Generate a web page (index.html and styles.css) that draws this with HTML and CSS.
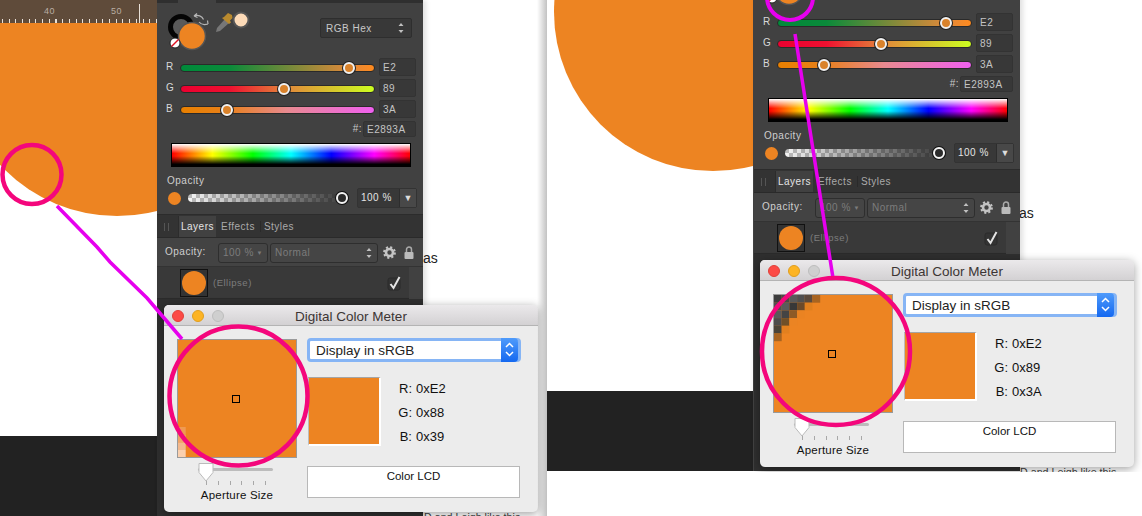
FILE: index.html
```html
<!DOCTYPE html>
<html lang="en">
<head>
<meta charset="utf-8">
<title>Digital Color Meter comparison</title>
<link rel="stylesheet" href="styles.css">
</head>
<body>
<svg width="0" height="0" class="defs">
  <defs>
    <g id="head-art">
      <circle cx="24" cy="24" r="10.5" fill="#5a5a5a" stroke="#050505" stroke-width="5"/>
      <circle cx="35" cy="33" r="13.5" fill="#ed8422" stroke="#555" stroke-width="1.5"/>
      <circle cx="18" cy="40" r="5" fill="#fff" stroke="#222"/>
      <path d="M14.5 43.5 21.5 36.5" stroke="#e01020" stroke-width="1.4"/>
      <path d="M37 13c4-1.500 8 0 9.500 3.500M37 13l3-2.500M37 13l3.500 1.500M51 21c-4 1.500-7 .5-9-2M51 21l-3.500.5M51 21l-.5-3.500" fill="none" stroke="#b5b5b5" stroke-width="1.200"/>
      <path d="M60 25l8-9 4 4-9 8-4 1z" fill="#777"/>
      <path d="M67 14l4-4 4 2 .5 3-2.500 2.500 1 2-2 1.500-7-6z" fill="#b98a2e"/>
      <circle cx="84" cy="17" r="7.500" fill="#fddbb8" stroke="#555" stroke-width="2"/>
    </g>
    <g id="updown">
      <path d="M1.500 4 4 1l2.500 3zM1.500 8 4 11l2.500-3z" fill="currentColor"/>
    </g>
    <g id="gear">
      <circle cx="6.500" cy="6.500" r="3.500" fill="none" stroke="#c4c4c4" stroke-width="2.600"/>
      <circle cx="6.500" cy="6.500" r="5.400" fill="none" stroke="#c4c4c4" stroke-width="2" stroke-dasharray="2.120 2.120"/>
    </g>
    <g id="lock">
      <path d="M2.500 6V3.500a2.500 2.500 0 0 1 5 0V6" fill="none" stroke="#aaa" stroke-width="1.500"/>
      <rect x="0.500" y="6" width="9" height="7" rx="1" fill="#bbb"/>
    </g>
    <g id="check">
      <rect x="1" y="3" width="12" height="12" rx="2" fill="#333" stroke="#2b2b2b"/>
      <path d="M3.500 9 6.500 13 12.500 2" fill="none" stroke="#e4e4e4" stroke-width="2"/>
    </g>
    <g id="stepper">
      <path d="M2 6 5.500 2.500 9 6M2 11 5.500 14.500 9 11" fill="none" stroke="#fff" stroke-width="1.500"/>
    </g>
    <g id="knob">
      <path d="M1 1.500h14v9L8 19 1 10.500z" fill="#fff" stroke="#bbb"/>
    </g>
  </defs>
</svg>

<section class="shot shot-left">
  <div class="scene">
    <div class="canvas">
      <div class="ruler">
        <span class="ruler-num num-40">40</span>
        <span class="ruler-num num-50">50</span>
        <span class="ruler-cursor"></span>
      </div>
      <div class="ellipse"></div>
      <div class="canvas-floor"></div>
    </div>
    <p class="page-word">as</p>
    <p class="page-line">D and Leigh like this</p>

    <aside class="panel">
      <div class="top-strip"><span class="top-tab"></span></div>
      <div class="color-head">
        <svg class="head-art" viewBox="0 0 100 55" width="100" height="55"><use href="#head-art"/></svg>
        <div class="mode-select"><span>RGB Hex</span><svg class="updown" width="8" height="12"><use href="#updown"/></svg></div>
      </div>
      <div class="channel"><span class="ch-label">R</span><div class="track track-r"><i class="thumb" style="left:87%"></i></div><span class="field ch-value">E2</span></div>
      <div class="channel"><span class="ch-label">G</span><div class="track track-g"><i class="thumb" style="left:53.500%"></i></div><span class="field ch-value">89</span></div>
      <div class="channel"><span class="ch-label">B</span><div class="track track-b"><i class="thumb" style="left:24%"></i></div><span class="field ch-value">3A</span></div>
      <div class="hex-row"><span class="hex-label">#:</span><span class="field hex-value">E2893A</span></div>
      <div class="spectrum"></div>
      <div class="opacity-label">Opacity</div>
      <div class="opacity-row">
        <span class="dot"></span>
        <div class="alpha-track"><i class="alpha-thumb"></i></div>
        <div class="combo"><span class="combo-value">100 %</span><span class="combo-arrow">▼</span></div>
      </div>
      <div class="tabbar"><span class="grip"></span><span class="tab tab-active">Layers</span><span class="tab">Effects</span><span class="tab tab-last">Styles</span></div>
      <div class="layer-controls">
        <span class="lc-label">Opacity:</span>
        <span class="mini-select mini-pct"><span>100 %</span><b>▼</b></span>
        <span class="mini-select mini-mode"><span>Normal</span><svg class="updown" width="8" height="12"><use href="#updown"/></svg></span>
        <svg class="lc-icon" width="13" height="13"><use href="#gear"/></svg>
        <svg class="lc-icon" width="10" height="14"><use href="#lock"/></svg>
      </div>
      <div class="layer-row">
        <span class="layer-thumb"><i></i></span>
        <span class="layer-name">(Ellipse)</span>
        <svg class="layer-check" width="14" height="16"><use href="#check"/></svg>
      </div>
      <div class="panel-rest"></div>
    </aside>

    <div class="meter">
      <header class="meter-title">
        <span class="light light-red"></span><span class="light light-yellow"></span><span class="light light-off"></span>
        <span class="meter-name">Digital Color Meter</span>
      </header>
      <div class="meter-body">
        <div class="meter-left">
          <div class="aperture">
            <svg class="cross-svg" width="118" height="117" viewBox="0 0 118 117">
              <rect x="0" y="87" width="7.700" height="7.700" fill="#ef9a52"/>
              <rect x="0" y="94.700" width="7.700" height="7.700" fill="#f0a468"/>
              <rect x="0" y="102.400" width="7.700" height="7.700" fill="#f3b88c"/>
              <rect x="0" y="110" width="7.700" height="7" fill="#fbd0ae"/>
            </svg>
            <span class="crosshair"></span>
          </div>
          <div class="ap-slider">
            <svg class="ap-knob" width="16" height="20"><use href="#knob"/></svg>
            <div class="ap-ticks"><i></i><i></i><i></i><i></i><i></i><i></i></div>
          </div>
          <div class="ap-label">Aperture Size</div>
        </div>
        <div class="meter-right">
          <div class="display-select"><span>Display in sRGB</span><svg class="stepper" width="11" height="17"><use href="#stepper"/></svg></div>
          <div class="readout-row">
            <div class="swatch"></div>
            <dl class="readout">
              <div><dt>R:</dt><dd>0xE2</dd></div>
              <div><dt>G:</dt><dd>0x88</dd></div>
              <div><dt>B:</dt><dd>0x39</dd></div>
            </dl>
          </div>
          <div class="lcd">Color LCD</div>
        </div>
      </div>
    </div>
  </div>
  <svg class="marks" width="547" height="516" viewBox="0 0 547 516">
    <circle class="mark-pink" cx="32" cy="174.500" r="29.500"/>
    <path class="mark-line" d="M57 206 97 247 110 262 147 298 182 339"/>
    <ellipse class="mark-pink" cx="238.500" cy="396" rx="69" ry="69.500"/>
  </svg>
  <div class="edge-shade"></div>
</section>

<section class="shot shot-right">
  <div class="scene scene-shifted">
    <div class="canvas">
      <div class="ruler">
        <span class="ruler-num num-40">40</span>
        <span class="ruler-num num-50">50</span>
      </div>
      <div class="ellipse"></div>
      <div class="canvas-floor"></div>
    </div>
    <p class="page-word">as</p>
    <p class="page-line">D and Leigh like this</p>

    <aside class="panel">
      <div class="top-strip"><span class="top-tab"></span></div>
      <div class="color-head">
        <svg class="head-art" viewBox="0 0 100 55" width="100" height="55"><use href="#head-art"/></svg>
        <div class="mode-select"><span>RGB Hex</span><svg class="updown" width="8" height="12"><use href="#updown"/></svg></div>
      </div>
      <div class="channel"><span class="ch-label">R</span><div class="track track-r"><i class="thumb" style="left:87%"></i></div><span class="field ch-value">E2</span></div>
      <div class="channel"><span class="ch-label">G</span><div class="track track-g"><i class="thumb" style="left:53.500%"></i></div><span class="field ch-value">89</span></div>
      <div class="channel"><span class="ch-label">B</span><div class="track track-b"><i class="thumb" style="left:24%"></i></div><span class="field ch-value">3A</span></div>
      <div class="hex-row"><span class="hex-label">#:</span><span class="field hex-value">E2893A</span></div>
      <div class="spectrum"></div>
      <div class="opacity-label">Opacity</div>
      <div class="opacity-row">
        <span class="dot"></span>
        <div class="alpha-track"><i class="alpha-thumb"></i></div>
        <div class="combo"><span class="combo-value">100 %</span><span class="combo-arrow">▼</span></div>
      </div>
      <div class="tabbar"><span class="grip"></span><span class="tab tab-active">Layers</span><span class="tab">Effects</span><span class="tab tab-last">Styles</span></div>
      <div class="layer-controls">
        <span class="lc-label">Opacity:</span>
        <span class="mini-select mini-pct"><span>100 %</span><b>▼</b></span>
        <span class="mini-select mini-mode"><span>Normal</span><svg class="updown" width="8" height="12"><use href="#updown"/></svg></span>
        <svg class="lc-icon" width="13" height="13"><use href="#gear"/></svg>
        <svg class="lc-icon" width="10" height="14"><use href="#lock"/></svg>
      </div>
      <div class="layer-row">
        <span class="layer-thumb"><i></i></span>
        <span class="layer-name">(Ellipse)</span>
        <svg class="layer-check" width="14" height="16"><use href="#check"/></svg>
      </div>
      <div class="panel-rest"></div>
    </aside>

    <div class="meter">
      <header class="meter-title">
        <span class="light light-red"></span><span class="light light-yellow"></span><span class="light light-off"></span>
        <span class="meter-name">Digital Color Meter</span>
      </header>
      <div class="meter-body">
        <div class="meter-left">
          <div class="aperture">
            <svg class="cross-svg" width="118" height="117" viewBox="0 0 118 117">
              <g class="px-row">
                <rect x="0" y="0" width="7.700" height="7.700" fill="#3d3d3d"/><rect x="7.700" y="0" width="7.700" height="7.700" fill="#4a4a4a"/><rect x="15.400" y="0" width="7.700" height="7.700" fill="#5a5a5a"/><rect x="23.100" y="0" width="7.700" height="7.700" fill="#505050"/><rect x="30.800" y="0" width="7.700" height="7.700" fill="#5a4a3c"/><rect x="38.500" y="0" width="7.700" height="7.700" fill="#a86420"/>
                <rect x="0" y="7.700" width="7.700" height="7.700" fill="#505050"/><rect x="7.700" y="7.700" width="7.700" height="7.700" fill="#5b5b5b"/><rect x="15.400" y="7.700" width="7.700" height="7.700" fill="#383838"/><rect x="23.100" y="7.700" width="7.700" height="7.700" fill="#6b4a2a"/><rect x="30.800" y="7.700" width="7.700" height="7.700" fill="#e0801f"/>
                <rect x="0" y="15.400" width="7.700" height="7.700" fill="#5a5a5a"/><rect x="7.700" y="15.400" width="7.700" height="7.700" fill="#444"/><rect x="15.400" y="15.400" width="7.700" height="7.700" fill="#8d5a26"/><rect x="23.100" y="15.400" width="7.700" height="7.700" fill="#ea8322"/>
                <rect x="0" y="23.100" width="7.700" height="7.700" fill="#4c4c4c"/><rect x="7.700" y="23.100" width="7.700" height="7.700" fill="#705028"/><rect x="15.400" y="23.100" width="7.700" height="7.700" fill="#eb8423"/>
                <rect x="0" y="30.800" width="7.700" height="7.700" fill="#4a4438"/><rect x="7.700" y="30.800" width="7.700" height="7.700" fill="#e2801f"/>
                <rect x="0" y="38.500" width="7.700" height="7.700" fill="#a86420"/>
              </g>
            </svg>
            <span class="crosshair"></span>
          </div>
          <div class="ap-slider">
            <svg class="ap-knob" width="16" height="20"><use href="#knob"/></svg>
            <div class="ap-ticks"><i></i><i></i><i></i><i></i><i></i><i></i></div>
          </div>
          <div class="ap-label">Aperture Size</div>
        </div>
        <div class="meter-right">
          <div class="display-select"><span>Display in sRGB</span><svg class="stepper" width="11" height="17"><use href="#stepper"/></svg></div>
          <div class="readout-row">
            <div class="swatch"></div>
            <dl class="readout">
              <div><dt>R:</dt><dd>0xE2</dd></div>
              <div><dt>G:</dt><dd>0x89</dd></div>
              <div><dt>B:</dt><dd>0x3A</dd></div>
            </dl>
          </div>
          <div class="lcd">Color LCD</div>
        </div>
      </div>
    </div>
  </div>
  <svg class="marks" width="595" height="472" viewBox="0 0 595 472">
    <circle class="mark-magenta" cx="243" cy="-3" r="23"/>
    <path class="mark-line" d="M248 34 286 278"/>
    <ellipse class="mark-pink" cx="289" cy="351.500" rx="74" ry="73.500"/>
  </svg>
</section>
</body>
</html>
```

FILE: styles.css
```css
* { box-sizing: border-box; }
html, body { margin: 0; padding: 0; }
body {
  position: relative;
  width: 1142px;
  height: 516px;
  overflow: hidden;
  background: #fff;
  font-family: "Liberation Sans", Arial, sans-serif;
}
.defs { position: absolute; }

/* the two photographed windows on the free canvas */
.shot { position: absolute; top: 0; overflow: hidden; background: #fff; }
.shot-left { left: 0; width: 547px; height: 516px; }
.shot-right { left: 547px; width: 595px; height: 472px; }
.scene { position: absolute; left: 0; top: 0; width: 595px; height: 516px; }
.scene-shifted { left: 49px; top: -45px; }
.scene-shifted .panel { width: 267px; padding-left: 1px; }
.marks { position: absolute; left: 0; top: 0; overflow: hidden; }
.mark-pink { fill: none; stroke: #f4067c; stroke-width: 4.5; }
.mark-magenta { fill: none; stroke: #e600ee; stroke-width: 4; }
.mark-line { fill: none; stroke: #e600ee; stroke-width: 3.500; }
.edge-shade {
  position: absolute; right: 0; top: 0; width: 10px; height: 100%;
  background: linear-gradient(90deg, rgba(0,0,0,0), rgba(0,0,0,.24));
}

/* document canvas */
.canvas { position: absolute; left: -49px; top: 0; width: 206px; height: 516px; overflow: hidden; background: #fff; }
.ruler {
  position: relative; z-index: 1; height: 23px;
  background:
    repeating-linear-gradient(90deg, #e8e0d8 0 1px, transparent 1px 6.700px) 4px 19px / 100% 4px no-repeat,
    #5f4b3a;
}
.ruler-num { position: absolute; top: 6px; font-size: 9px; letter-spacing: .5px; color: #b9aea3; }
.num-40 { left: 93px; }
.num-50 { left: 160px; }
.ruler-cursor { position: absolute; left: 188px; top: 4px; width: 1px; height: 19px; background: #e8e0d8; }
.ellipse { position: absolute; left: 7px; top: -102px; width: 318px; height: 318px; border-radius: 50%; background: #ed8422; }
.canvas-floor { position: absolute; left: 0; right: 0; top: 436px; bottom: 0; background: #222; }

.page-word { position: absolute; left: 423px; top: 250px; margin: 0; font-size: 14px; color: #222; }
.page-line { position: absolute; left: 424px; top: 511px; margin: 0; font-size: 10.700px; color: #444; white-space: nowrap; }

/* Affinity panel */
.panel {
  position: absolute; left: 157px; top: 0; width: 266px; height: 516px;
  display: flex; flex-direction: column;
  background: #414141; color: #cfcfcf; font-size: 10px; letter-spacing: .5px;
  box-shadow: 3px 0 5px rgba(0,0,0,.12);
}
.top-strip { height: 3px; background: #2f2f2f; padding-left: 21px; flex: none; }
.top-tab { display: block; width: 38px; height: 3px; background: #414141; }
.color-head { height: 55px; flex: none; display: flex; padding: 0 11px 0 0; align-items: flex-start; justify-content: space-between; }
.head-art { display: block; }
.mode-select {
  margin-top: 15px; width: 92px; height: 20px; padding: 0 6px 0 5px;
  display: flex; align-items: center; justify-content: space-between;
  background: #383838; border: 1px solid #2e2e2e; border-radius: 2px; color: #c8c8c8;
}
.updown { color: #c0c0c0; flex: none; }
.channel { height: 21px; flex: none; display: flex; align-items: center; padding: 0 7px 3px 9px; }
.ch-label { width: 14px; font-size: 10px; margin-top: -1px; color: #d8d8d8; }
.track { position: relative; top: 1px; width: 195px; height: 8px; border-radius: 4px; border: 1px solid #2a2a2a; }
.track-r { background: linear-gradient(90deg, #008a3a, #0a8a3a 25%, #e2893a 88%, #ff8a1e); }
.track-g { background: linear-gradient(90deg, #ec0030, #ee1030 25%, #e2893a 55%, #ccff20); }
.track-b { background: linear-gradient(90deg, #e88000, #e8801a 24%, #e88a90 55%, #f060f0); }
.thumb {
  position: absolute; top: -3px; width: 12px; height: 12px; margin-left: -6px; border-radius: 50%;
  background: #d9822b; border: 2px solid #f0f0f0; box-shadow: 0 0 0 1px #222;
}
.field {
  display: flex; align-items: center; padding-left: 3px; height: 18px;
  background: #383838; border: 1px solid #333; border-radius: 2px; color: #c4c4c4; font-size: 10px;
}
.ch-value { width: 37px; margin-left: 4px; }
.hex-row { height: 16px; flex: none; display: flex; justify-content: flex-end; align-items: center; padding-right: 7px; gap: 1px; }
.hex-label { margin-top: -2px; color: #c8c8c8; }
.hex-value { width: 53px; height: 16px; }
.spectrum {
  flex: none; width: 240px; height: 24px; margin: 6px 0 0 14px; border: 1px solid #000;
  background:
    linear-gradient(#fff 0, rgba(255,255,255,0) 42%, rgba(0,0,0,0) 55%, #000 92%),
    linear-gradient(90deg, #f00 0, #ff0 17%, #0f0 34%, #0ff 50%, #00f 67%, #f0f 85%, #f00 100%);
}
.opacity-label { height: 21px; flex: none; margin-left: 10px; padding-top: 8px; font-size: 10px; color: #cfcfcf; }
.opacity-row { height: 20px; flex: none; display: flex; align-items: center; padding-left: 11px; }
.dot { width: 13px; height: 13px; border-radius: 50%; background: #ed8422; flex: none; }
.alpha-track {
  position: relative; width: 158px; height: 8px; margin-left: 7px; border-radius: 4px;
  background:
    linear-gradient(90deg, rgba(255,255,255,.55), rgba(50,50,50,.92) 97%),
    repeating-conic-gradient(#e8e8e8 0 25%, #6a6a6a 0 50%) 0 0 / 8px 8px;
}
.alpha-thumb {
  position: absolute; right: -2px; top: -2px; width: 12px; height: 12px; border-radius: 50%;
  background: #2b2b2b; border: 2px solid #f4f4f4; box-shadow: 0 0 0 1px #111;
}
.combo {
  width: 60px; height: 20px; margin-left: 11px; display: flex; border: 1px solid #333; border-radius: 2px;
  background: #383838; color: #e4e4e4; font-size: 10px;
}
.combo-value { flex: 1; padding: 3px 0 0 3px; }
.combo-arrow { width: 17px; border-left: 1px solid #2d2d2d; background: #484848; font-size: 9px; letter-spacing: 0; text-align: center; padding-top: 4px; color: #ddd; }
.tabbar {
  flex: none; height: 24px; margin-top: 6px; padding: 1px 0 0 7px; display: flex; align-items: center;
  background: #333; border-top: 1px solid #2c2c2c; border-bottom: 1px solid #2a2a2a; color: #aaa; font-size: 10px;
}
.grip { width: 5px; height: 8px; margin-right: 9px; border-left: 1px solid #555; border-right: 1px solid #555; }
.tab { padding: 0 5px 0 3px; line-height: 11px; border-right: 1px solid #2a2a2a; }
.tab-active { display: flex; align-items: center; align-self: stretch; width: 38px; padding: 0 0 0 2px; background: #414141; color: #e4e4e4; margin-right: 2px; border-right: 0; border-left: 1px solid #2c2c2c; }
.tab-last { border-right: 0; padding-left: 3px; }
.layer-controls {
  flex: none; height: 29px; display: flex; align-items: center; padding: 1px 0 0 8px;
  background: #434343; color: #cfcfcf; border-bottom: 1px solid #333;
}
.lc-label { width: 53px; margin-top: -2px; font-size: 10px; }
.mini-select {
  height: 20px; display: flex; align-items: center; justify-content: space-between;
  border: 1px solid #2e2e2e; border-radius: 3px; background: #454545; color: #7c7c7c; padding: 0 4px;
}
.mini-select b { font-size: 6px; font-weight: 400; }
.mini-pct { width: 50px; }
.mini-mode { width: 108px; margin-left: 2px; }
.lc-icon { margin-left: 5px; flex: none; }
.lc-icon + .lc-icon { margin-left: 8px; }
.layer-row {
  flex: none; height: 32px; display: flex; align-items: center; padding-left: 23px;
  width: 252px; background: #393939; border-bottom: 1px solid #2b2b2b; color: #7d7d7d; font-size: 9.500px;
}
.layer-thumb { width: 28px; height: 28px; padding: 1px; background: #333; border: 1px solid #111; flex: none; }
.layer-thumb i { display: block; width: 100%; height: 100%; border-radius: 50%; background: #ed8422; }
.layer-name { margin-left: 5px; flex: 1; }
.layer-check { margin-right: 8px; }
.panel-rest { flex: 1; background: #2f2f2f; }

/* Digital Color Meter */
.meter {
  position: absolute; left: 164px; top: 305px; width: 374px; height: 207px;
  display: flex; flex-direction: column;
  background: #ececec; border-radius: 5px; overflow: hidden; color: #111;
  box-shadow: 0 2px 10px rgba(0,0,0,.38);
}
.meter-title {
  position: relative; flex: none; height: 21px; padding: 5px 0 0 8px; display: flex; gap: 8px;
  background: linear-gradient(#ebe9eb, #d3d1d3); border-bottom: 1px solid #b4b4b4;
}
.light { width: 12px; height: 12px; border-radius: 50%; }
.light-red { background: #fc4a46; border: 1px solid #e0403a; }
.light-yellow { background: #fdb424; border: 1px solid #e09e1e; }
.light-off { background: #cfcfcf; border: 1px solid #bdbdbd; }
.meter-name { position: absolute; left: 0; right: 0; top: 4px; text-align: center; font-size: 13.500px; line-height: 15px; color: #3c3534; }
.meter-body { flex: 1; display: flex; padding: 13px 0 0 13px; gap: 10px; }
.meter-left { width: 120px; flex: none; }
.aperture { position: relative; width: 120px; height: 119px; background: #ed8422; border: 1px solid #9a9a9a; }
.cross-svg { display: block; }
.crosshair { position: absolute; left: 54px; top: 55px; width: 8px; height: 8px; border: 1px solid #000; }
.ap-slider { position: relative; width: 75px; height: 26px; margin-left: 21px; }
.ap-slider::before { content: ""; position: absolute; left: 0; right: 0; top: 10px; height: 3px; border-radius: 2px; background: #bcbcbc; }
.ap-knob { position: absolute; left: 0; top: 4px; }
.ap-ticks { position: absolute; left: 8px; right: 7px; top: 23px; display: flex; justify-content: space-between; }
.ap-ticks i { width: 1px; height: 4px; background: #a8a8a8; }
.ap-label { margin-top: 5px; text-align: center; font-size: 11.500px; line-height: 13px; color: #111; letter-spacing: .2px; }
.meter-right { width: 214px; flex: none; margin-top: -1px; }
.display-select {
  position: relative; height: 24px; display: flex; align-items: center; padding-left: 6px;
  background: #fff; border: 3px solid #86b5f5; border-radius: 4px; font-size: 13.500px; color: #222;
}
.stepper { position: absolute; right: 0; top: -3px; width: 17px; height: 24px; padding: 3px 3px; background: linear-gradient(#4f9bfb, #1468f0); border-radius: 0 4px 4px 0; }
.readout-row { display: flex; margin-top: 15px; }
.swatch { width: 73px; height: 69px; margin-left: 1px; background: #ed8422; border: 2px solid #fff; border-top: 1px solid #a5a5a5; border-left: 1px solid #bcbcbc; }
.readout { margin: 4px 0 0 17px; display: flex; flex-direction: column; gap: 8px; font-size: 13px; line-height: 16px; color: #111; }
.readout div { display: flex; gap: 4px; }
.readout dt { width: 14px; text-align: right; }
.readout dd { margin: 0; }
.lcd { margin-top: 20px; height: 32px; width: 213px; padding-top: 3px; background: #fff; border: 1px solid #b8b8b8; text-align: center; font-size: 11.500px; line-height: 13px; color: #111; }
```
